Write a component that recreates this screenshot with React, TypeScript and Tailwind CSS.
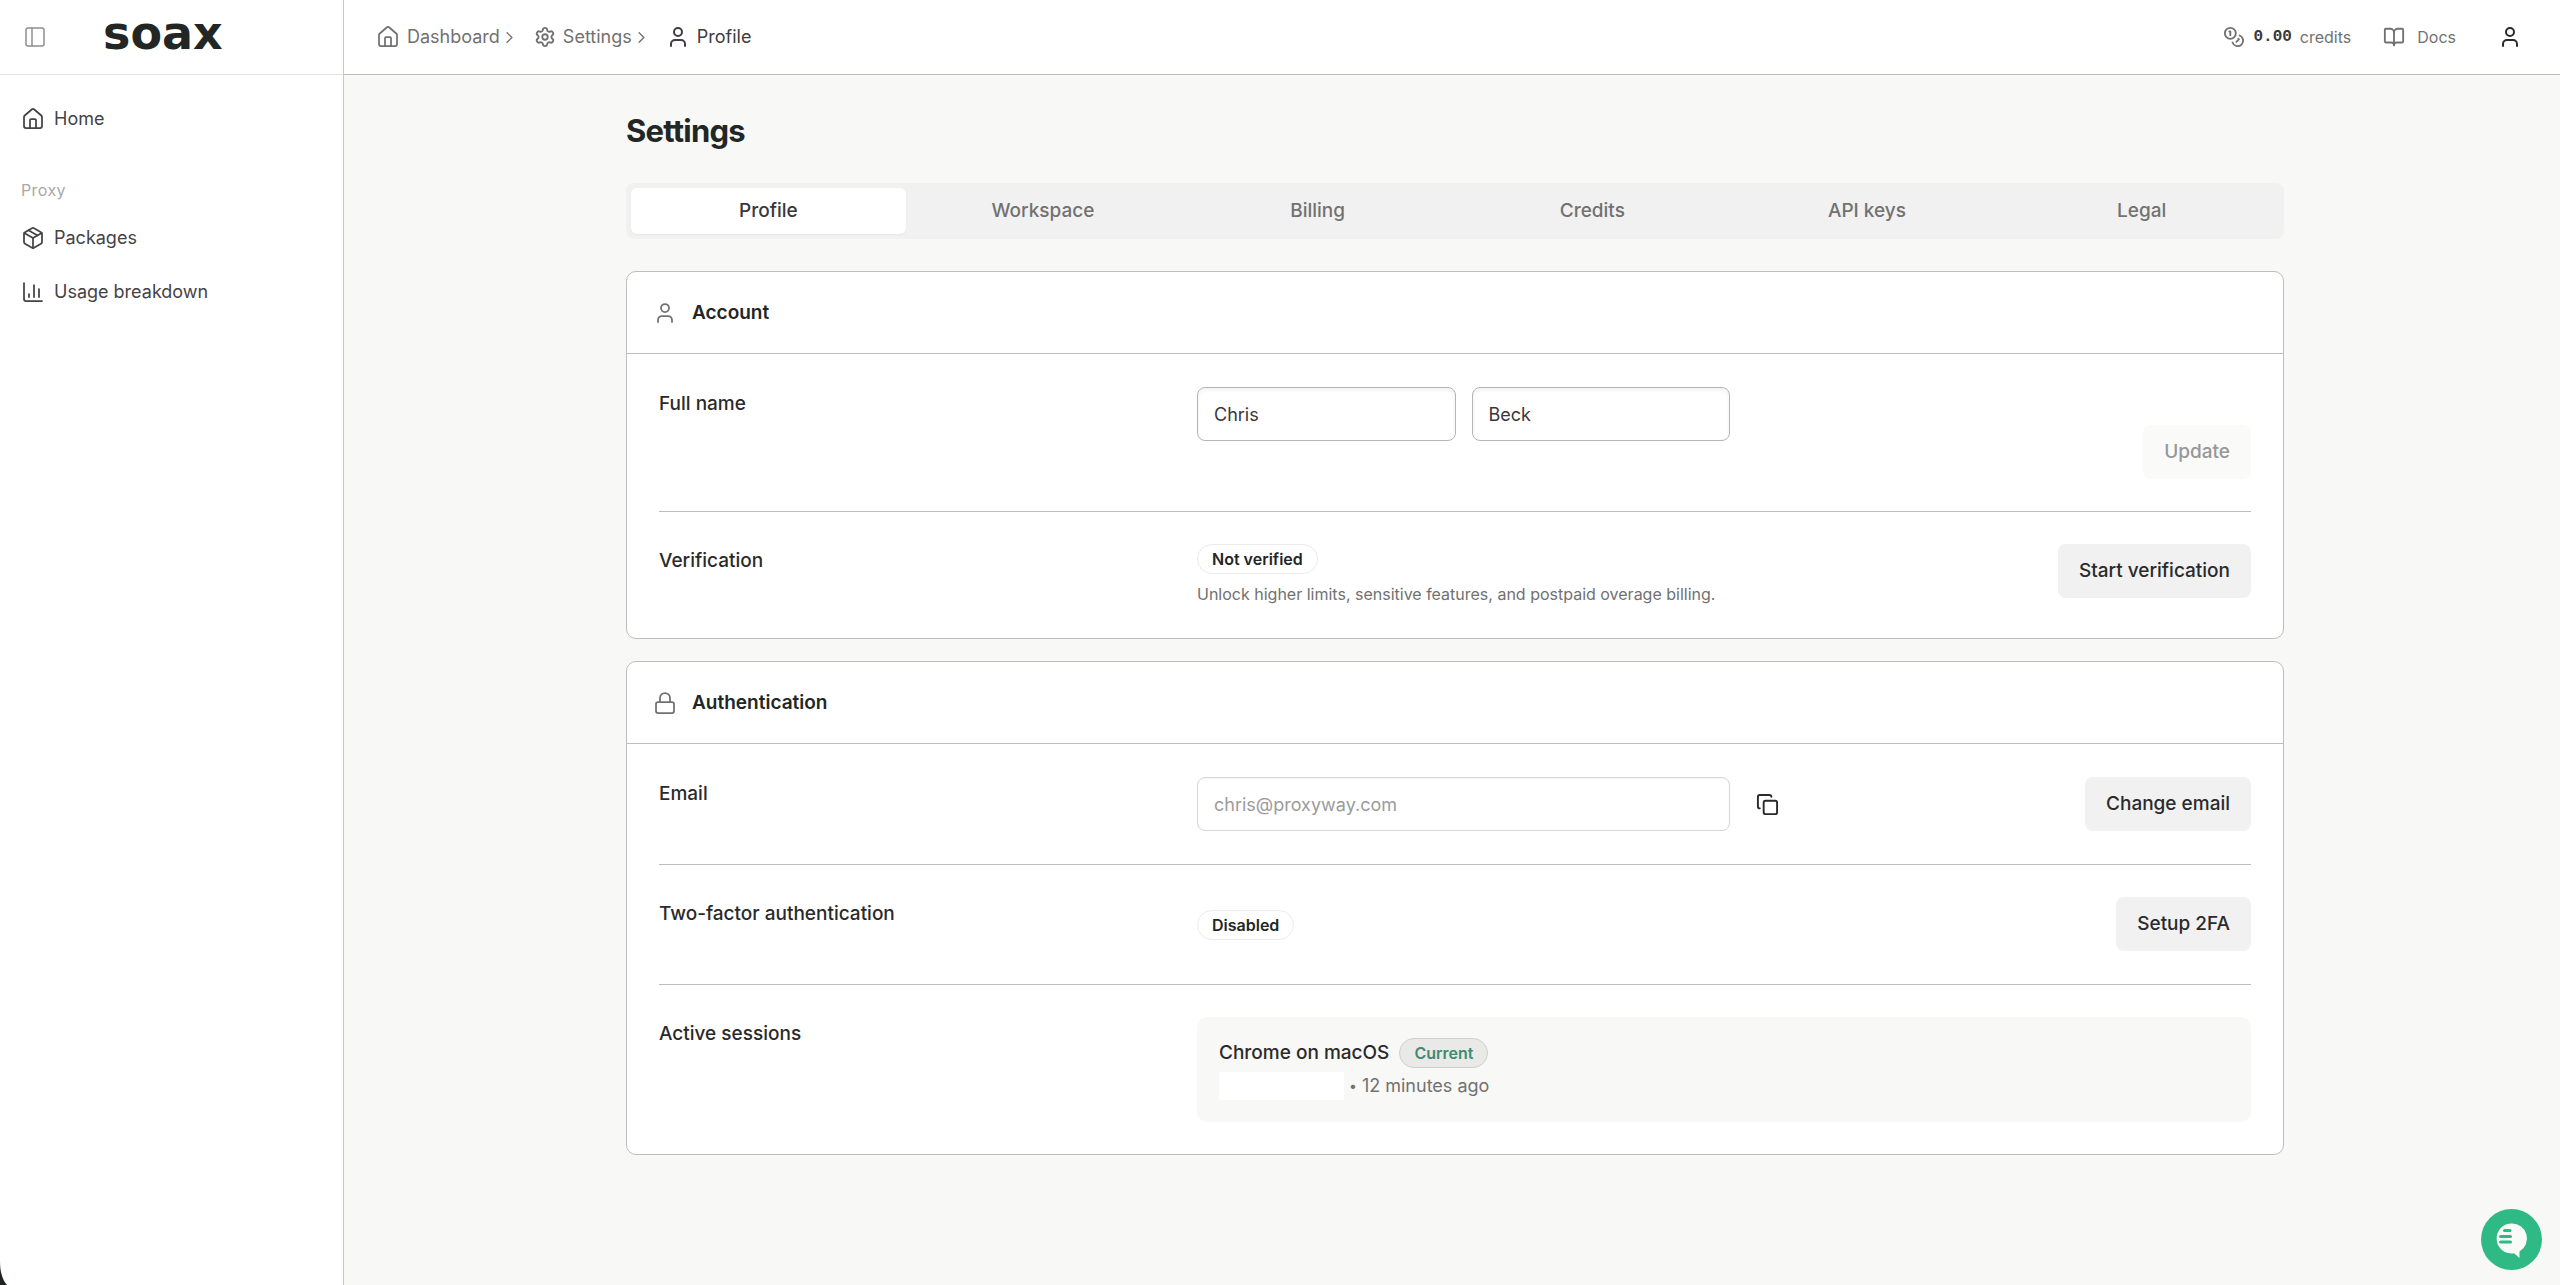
import type { ReactNode } from "react";
import {
    BookOpen,
    ChartColumn,
    ChevronRight,
    Coins,
    Copy,
    House,
    Lock,
    Package,
    PanelLeft,
    Settings,
    User,
} from "lucide-react";

const TABS = ["Profile", "Workspace", "Billing", "Credits", "API keys", "Legal"];

const Sidebar = () => {
    return (
        <aside className="w-[344px] shrink-0 flex flex-col bg-white border-r border-[#c8c8c6]">
            <div className="h-[75px] flex items-center gap-[56px] pl-[23px] border-b border-[#e4e4e3]">
                <button aria-label="Toggle sidebar" className="text-[#8f8f8f]">
                    <PanelLeft size={24} strokeWidth={1.5} />
                </button>
                <a href="#" className="font-['DejaVu_Sans',sans-serif] font-bold text-[46px] leading-[46px] pb-2 text-[#222625]">
                    soax
                </a>
            </div>
            <nav className="flex flex-col pl-[21px] pr-5 pt-[17px] text-[18px] text-[#454246]">
                <a href="#" className="flex items-center gap-[9px] h-[54px]">
                    <House size={24} strokeWidth={1.75} />
                    Home
                </a>
                <h2 className="h-[65px] pt-[32px] text-[16px] leading-[24px] tracking-wide text-[#a8a8a8]">Proxy</h2>
                <a href="#" className="flex items-center gap-[9px] h-[54px]">
                    <Package size={24} strokeWidth={1.75} />
                    Packages
                </a>
                <a href="#" className="flex items-center gap-[9px] h-[54px]">
                    <ChartColumn size={24} strokeWidth={1.75} />
                    Usage breakdown
                </a>
            </nav>
        </aside>
    );
};

const Header = () => {
    return (
        <header className="h-[75px] flex items-center justify-between pl-8 pr-[38px] bg-white border-b border-[#bdbdbb]">
            <nav aria-label="Breadcrumb" className="flex items-center gap-[15px] text-[18px] text-[#717171]">
                <a href="#" className="flex items-center gap-[7px]">
                    <House size={24} strokeWidth={1.75} />
                    <span className="flex items-center">
                        Dashboard
                        <ChevronRight size={19} strokeWidth={1.75} />
                    </span>
                </a>
                <a href="#" className="flex items-center gap-[7px]">
                    <Settings size={22} strokeWidth={2} />
                    <span className="flex items-center">
                        Settings
                        <ChevronRight size={19} strokeWidth={1.75} />
                    </span>
                </a>
                <a href="#" aria-current="page" className="flex items-center gap-[7px] text-[#403c41]">
                    <User size={24} strokeWidth={2} />
                    Profile
                </a>
            </nav>
            <div className="flex items-center text-[16px] text-[#717171]">
                <Coins size={22} strokeWidth={2} />
                <span className="ml-2 font-['Liberation_Mono',monospace] font-bold text-[#3a373b]">0.00</span>
                <span className="ml-2">credits</span>
                <a href="#" className="flex items-center gap-3 ml-8">
                    <BookOpen size={22} strokeWidth={2} />
                    Docs
                </a>
                <button aria-label="Account menu" className="ml-[42px] text-[#2a2a2a]">
                    <User size={24} strokeWidth={2} />
                </button>
            </div>
        </header>
    );
};

const Card = ({ icon, title, children }: { icon: ReactNode; title: string; children: ReactNode }) => {
    return (
        <section className="bg-white border border-[#bdbdbb] rounded-[10px]">
            <div className="h-[82px] flex items-center gap-[15px] px-[26px] border-b border-[#bdbdbb]">
                <span className="text-[#717171]">{icon}</span>
                <h2 className="font-semibold text-[#222625]">{title}</h2>
            </div>
            <div className="px-8 pt-px divide-y divide-[#bdbdbb]">{children}</div>
        </section>
    );
};

const Row = ({ label, htmlFor, children }: { label: string; htmlFor?: string; children: ReactNode }) => {
    return (
        <div className="grid grid-cols-3 gap-[22px] py-8">
            {htmlFor ? (
                <label htmlFor={htmlFor} className="pt-[3px] font-medium text-[#2a2a2a]">{label}</label>
            ) : (
                <h3 className="pt-[3px] font-medium text-[#2a2a2a]">{label}</h3>
            )}
            <div className="col-span-2 flex justify-between min-h-[55px]">{children}</div>
        </div>
    );
};

const ActionButton = ({ children, disabled }: { children: ReactNode; disabled?: boolean }) => {
    return (
        <button
            disabled={disabled}
            className="h-[54px] px-[21px] rounded-lg bg-[#f1f1f1] font-medium text-[#2a2a2a] whitespace-nowrap disabled:bg-[#fafaf9] disabled:text-[#979797]"
        >
            {children}
        </button>
    );
};

const Badge = ({ children }: { children: ReactNode }) => {
    return (
        <span className="inline-flex items-center h-[30px] px-[14px] rounded-full border border-[#ebebea] text-[16px] font-semibold text-[#222625]">
            {children}
        </span>
    );
};

const SettingsContent = () => {
    return (
        <main className="flex-1 pl-1.5 pb-16">
            <div className="max-w-[1658px] mx-auto">
                <h1 className="pt-9 text-[31px] leading-[40px] font-bold tracking-tight text-[#222625]">Settings</h1>

                <div role="tablist" className="mt-8 grid grid-cols-6 h-14 p-[5px] rounded-lg bg-[#f1f1f1]">
                    {TABS.map((tab, i) => (
                        <button
                            key={tab}
                            role="tab"
                            aria-selected={i === 0}
                            className="rounded-md font-medium text-[#717171] aria-selected:bg-white aria-selected:text-[#3a373b] aria-selected:shadow-xs"
                        >
                            {tab}
                        </button>
                    ))}
                </div>

                <div className="mt-8 space-y-[22px]">
                    <Card icon={<User size={24} strokeWidth={1.75} />} title="Account">
                        <Row label="Full name" htmlFor="first-name">
                            <div className="flex gap-4 w-[533px] h-[92px]">
                                <input
                                    id="first-name"
                                    defaultValue="Chris"
                                    className="flex-1 min-w-0 h-[54px] px-4 rounded-lg border border-[#b5b5b3] shadow-[inset_0_2px_4px_rgba(0,0,0,0.06)] text-[18px] text-[#3a373b]"
                                />
                                <input
                                    aria-label="Last name"
                                    defaultValue="Beck"
                                    className="flex-1 min-w-0 h-[54px] px-4 rounded-lg border border-[#b5b5b3] shadow-[inset_0_2px_4px_rgba(0,0,0,0.06)] text-[18px] text-[#3a373b]"
                                />
                            </div>
                            <div className="self-end">
                                <ActionButton disabled>Update</ActionButton>
                            </div>
                        </Row>
                        <Row label="Verification">
                            <div className="flex flex-col items-start">
                                <Badge>Not verified</Badge>
                                <p className="mt-2 text-[16px] leading-[24px] text-[#717171]">
                                    Unlock higher limits, sensitive features, and postpaid overage billing.
                                </p>
                            </div>
                            <div>
                                <ActionButton>Start verification</ActionButton>
                            </div>
                        </Row>
                    </Card>

                    <Card icon={<Lock size={24} strokeWidth={1.75} />} title="Authentication">
                        <Row label="Email" htmlFor="email">
                            <div className="flex items-start gap-[26px]">
                                <input
                                    id="email"
                                    type="email"
                                    disabled
                                    defaultValue="chris@proxyway.com"
                                    className="w-[533px] h-[54px] px-4 rounded-lg border border-[#d6d6d4] shadow-[inset_0_1px_2px_rgba(0,0,0,0.04)] text-[18px] text-[#9b9b9b]"
                                />
                                <button aria-label="Copy email" className="h-[54px] text-[#2a2a2a]">
                                    <Copy size={23} strokeWidth={2} />
                                </button>
                            </div>
                            <ActionButton>Change email</ActionButton>
                        </Row>
                        <Row label="Two-factor authentication">
                            <div className="flex items-center">
                                <Badge>Disabled</Badge>
                            </div>
                            <ActionButton>Setup 2FA</ActionButton>
                        </Row>
                        <Row label="Active sessions">
                            <div className="flex-1 h-[105px] px-[22px] pt-[21px] rounded-[10px] bg-[#f8f8f6]">
                                <div className="flex items-center gap-[10px]">
                                    <span className="font-medium text-[#2a2a2a]">Chrome on macOS</span>
                                    <span className="inline-flex items-center h-[30px] px-[14px] rounded-full border border-[#cfcfcd] bg-[#e9e9e8] text-[16px] font-semibold text-[#3f8a70]">
                                        Current
                                    </span>
                                </div>
                                <div className="mt-1 flex items-center gap-[5px] text-[18px] text-[#717171]">
                                    <span className="w-[125px] h-[28px] bg-white" />
                                    <span className="text-[14px]">•</span>
                                    <span>12 minutes ago</span>
                                </div>
                            </div>
                        </Row>
                    </Card>
                </div>
            </div>
        </main>
    );
};

const ChatButton = () => {
    return (
        <button aria-label="Open chat" className="fixed right-[18px] bottom-[15px] size-[61px] rounded-full bg-[#2fb985]">
            <svg viewBox="0 0 61 61" className="size-full">
                <path d="M31 14.500a15 15 0 0 1 7.500 28V49l-5.500-4.700A15 15 0 1 1 31 14.500z" fill="#fafaf8" />
                <path d="M23.500 21.500h5.500M19.500 27.500h10M19.500 33h10" stroke="#2fb985" strokeWidth="3" strokeLinecap="round" />
            </svg>
        </button>
    );
};

export default function App() {
    return (
        <div className="min-h-screen flex bg-[#f8f8f6] font-[Inter,sans-serif] text-[19px] leading-[28px]">
            <Sidebar />
            <div className="flex-1 flex flex-col min-w-0">
                <Header />
                <SettingsContent />
            </div>
            <ChatButton />
            <svg viewBox="0 0 7 24" className="fixed left-0 bottom-0 w-[7px] h-6" aria-hidden="true">
                <path d="M0 0C0 10 2 18 7 24H0z" fill="#1f2423" />
            </svg>
        </div>
    );
}
